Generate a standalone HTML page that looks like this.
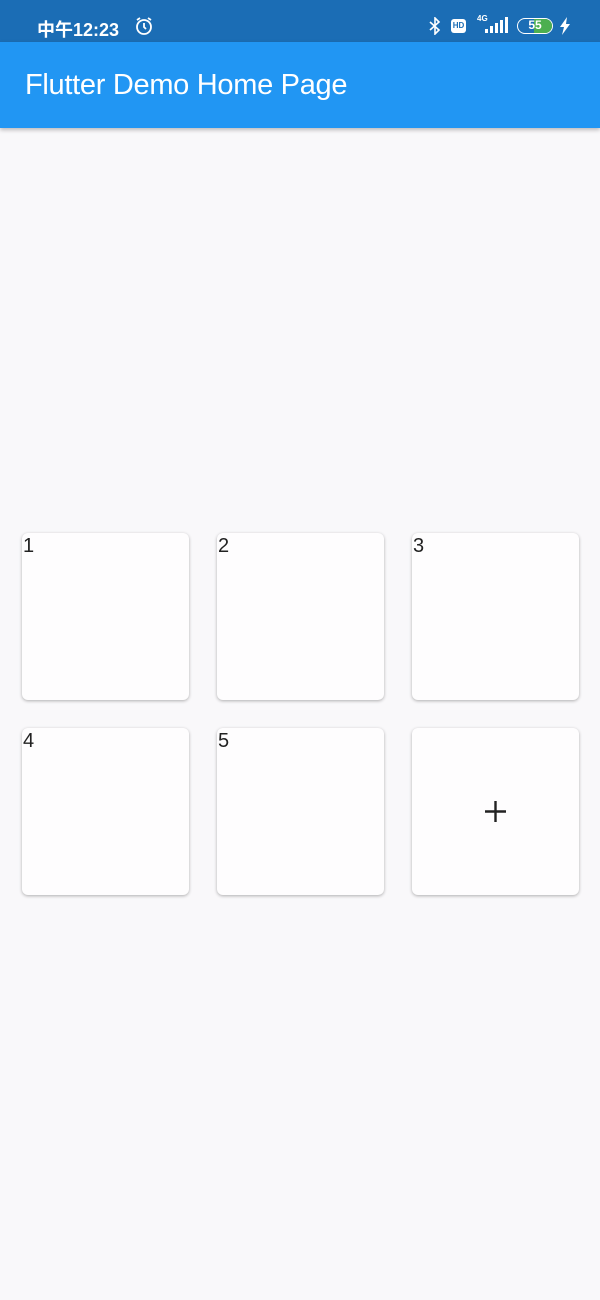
<!DOCTYPE html>
<html><head><meta charset="utf-8"><style>
*{margin:0;padding:0;box-sizing:border-box}
body{width:600px;height:1300px;background:#f9f8fa;font-family:"Liberation Sans","Noto Sans CJK SC",sans-serif;position:relative;overflow:hidden}
.sb{position:absolute;left:0;top:0;width:600px;height:42px;background:#1b6db5;color:#fff}
.ab{position:absolute;left:0;top:42px;width:600px;height:86px;background:#2196f3;box-shadow:0 2px 4px rgba(0,0,0,.25)}
.ab span{position:absolute;left:25px;top:27px;font-size:29px;color:#fff;letter-spacing:-0.3px}
.c{position:absolute;width:167px;height:167px;background:#fefdfe;border-radius:6px;box-shadow:0 1px 3px rgba(0,0,0,.3)}
.c span{position:absolute;left:1px;top:2px;font-size:20px;color:#222}
</style></head><body>
<div class="sb">
<span style="position:absolute;left:37px;top:16px;font-size:18px;font-weight:bold">中午12:23</span>
<svg style="position:absolute;left:134px;top:16px" width="20" height="20" viewBox="0 0 20 20" fill="none" stroke="#fff" stroke-width="1.8"><circle cx="10" cy="11" r="7"/><path d="M10 7v4l2 2M3 4l3-2M17 4l-3-2"/></svg>
<svg style="position:absolute;left:428px;top:17px" width="14" height="18" viewBox="0 0 14 18" fill="none" stroke="#fff" stroke-width="1.6"><path d="M2 5l9 8-4 4V1l4 4-9 8"/></svg>
<div style="position:absolute;left:451px;top:19px;width:15px;height:14px;background:#fff;border-radius:3px;color:#1b6db5;font-size:8px;font-weight:bold;text-align:center;line-height:14px">HD</div>
<span style="position:absolute;left:477px;top:14px;font-size:8px;font-weight:bold">4G</span>
<svg style="position:absolute;left:484px;top:17px" width="24" height="17" viewBox="0 0 24 17" fill="#fff"><rect x="1" y="12" width="3" height="4"/><rect x="6" y="9" width="3" height="7"/><rect x="11" y="6" width="3" height="10"/><rect x="16" y="3" width="3" height="13"/><rect x="21" y="0" width="3" height="16"/></svg>
<div style="position:absolute;left:517px;top:18px;width:36px;height:16px;border:1.5px solid #fff;border-radius:8px;overflow:hidden"><div style="position:absolute;right:0;top:0;width:18px;height:100%;background:#4caf50"></div><span style="position:relative;display:block;text-align:center;font-size:12px;font-weight:bold;line-height:13px">55</span></div>
<svg style="position:absolute;left:559px;top:17px" width="12" height="18" viewBox="0 0 12 18" fill="#fff"><path d="M8 0L1 10h4l-2 8 8-11H7z"/></svg>
</div>
<div class="ab"><span>Flutter Demo Home Page</span></div>
<div class="c" style="left:22px;top:533px"><span>1</span></div>
<div class="c" style="left:217px;top:533px"><span>2</span></div>
<div class="c" style="left:412px;top:533px"><span>3</span></div>
<div class="c" style="left:22px;top:728px"><span>4</span></div>
<div class="c" style="left:217px;top:728px"><span>5</span></div>
<div class="c" style="left:412px;top:728px"><svg style="position:absolute;left:72px;top:72px" width="23" height="23" viewBox="0 0 23 23" stroke="#222" stroke-width="2.4"><path d="M11.5 1v21M1 11.5h21"/></svg></div>
</body></html>
